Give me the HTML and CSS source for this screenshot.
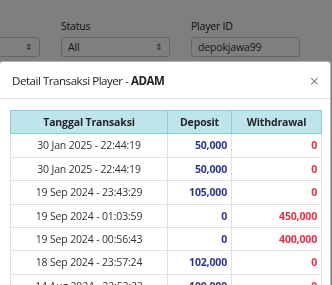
FILE: index.html
```html
<!DOCTYPE html>
<html lang="en">
<head>
    <meta charset="UTF-8">
    <meta name="viewport" content="width=device-width, initial-scale=1.0">
    <title>Detail Transaksi Player</title>
    <link rel="stylesheet" href="styles.css">
</head>
<body>

    <!-- Filter bar behind the modal -->
    <div class="filters">
        <div class="field">
            <label>Tipe</label>
            <div class="select">Semua <span class="arrows">&#8661;</span></div>
        </div>
        <div class="field">
            <label>Status</label>
            <div class="select">All <span class="arrows">&#8661;</span></div>
        </div>
        <div class="field">
            <label>Player ID</label>
            <div class="input">depokjawa99</div>
        </div>
    </div>

    <!-- Modal overlay -->
    <div class="backdrop">
        <div class="modal">
            <div class="modal-header">
                <div class="modal-title">Detail Transaksi Player - <b>ADAM</b></div>
                <button class="close">&times;</button>
            </div>
            <div class="modal-body">
                <table class="trx-table">
                    <thead>
                        <tr>
                            <th class="col-date">Tanggal Transaksi</th>
                            <th class="col-dep">Deposit</th>
                            <th class="col-wd">Withdrawal</th>
                        </tr>
                    </thead>
                    <tbody>
                        <tr><td class="date">30 Jan 2025 - 22:44:19</td><td class="dep">50,000</td><td class="wd">0</td></tr>
                        <tr><td class="date">30 Jan 2025 - 22:44:19</td><td class="dep">50,000</td><td class="wd">0</td></tr>
                        <tr><td class="date">19 Sep 2024 - 23:43:29</td><td class="dep">105,000</td><td class="wd">0</td></tr>
                        <tr><td class="date">19 Sep 2024 - 01:03:59</td><td class="dep">0</td><td class="wd">450,000</td></tr>
                        <tr><td class="date">19 Sep 2024 - 00:56:43</td><td class="dep">0</td><td class="wd">400,000</td></tr>
                        <tr><td class="date">18 Sep 2024 - 23:57:24</td><td class="dep">102,000</td><td class="wd">0</td></tr>
                        <tr><td class="date">14 Aug 2024 - 23:52:22</td><td class="dep">100,000</td><td class="wd">0</td></tr>
                    </tbody>
                </table>
            </div>
        </div>
    </div>

</body>
</html>
```

FILE: styles.css
```css
/* Basic Reset */
* {
    margin: 0;
    padding: 0;
    box-sizing: border-box;
    font-family: "Open Sans", sans-serif;
}

body {
    background-color: #fff;
    color: #212529;
    overflow: hidden;
}

/* Filters under the overlay */
.filters {
    display: flex;
    gap: 21px;
    margin-left: -69px;
    padding-top: 20px;
}

.field {
    display: flex;
    flex-direction: column;
    gap: 5px;
    width: 109px;
}

.field label {
    font-size: 10.5px;
    line-height: 12px;
    letter-spacing: -0.2px;
    color: #222;
}

.select,
.input {
    height: 20px;
    border: 1px solid #ccc;
    border-radius: 3px;
    font-size: 10.5px;
    letter-spacing: -0.15px;
    line-height: 18px;
    padding: 0 6px;
    color: #333;
    display: flex;
    justify-content: space-between;
}

.select .arrows {
    font-size: 9px;
    color: #555;
}

/* Modal */
.backdrop {
    position: fixed;
    inset: 0;
    background: rgba(0, 0, 0, 0.5);
}

.modal {
    margin-top: 61px;
    margin-left: -1px;
    width: 332px;
    background: #fff;
    border: 1px solid rgba(0, 0, 0, 0.3);
    border-radius: 4px;
    height: 400px;
}

.modal-header {
    display: flex;
    justify-content: space-between;
    align-items: center;
    height: 37px;
    padding: 0 11px 0 12px;
    border-bottom: 1px solid #dee2e6;
}

.modal-title {
    font-size: 11.5px;
    letter-spacing: -0.45px;
    color: #222;
}

.modal-title b {
    font-weight: 700;
}

.close {
    background: none;
    border: none;
    font-size: 16px;
    line-height: 1;
    color: #000;
    opacity: 0.5;
    margin-top: 2px;
    margin-right: 0;
}

.modal-body {
    padding: 11px 10px;
}

/* Transaction table */
.trx-table {
    border-collapse: collapse;
    table-layout: fixed;
    width: 311px;
    font-size: 10.5px;
    letter-spacing: -0.15px;
}

.trx-table th,
.trx-table td {
    border: 1px solid #dee2e6;
    padding: 4px 4px;
    line-height: 14.4px;
}

.trx-table th {
    background-color: #bee5eb;
    border-color: #86cfda;
    font-weight: 700;
    text-align: center;
    color: #212529;
    padding: 4px;
}

.col-date { width: 157px; }
.col-dep { width: 64px; }
.col-wd { width: 90px; }

.trx-table td.date {
    text-align: center;
    color: #333;
}

.trx-table td.dep {
    text-align: right;
    font-weight: 700;
    color: #2b3a8c;
}

.trx-table td.wd {
    text-align: right;
    font-weight: 700;
    color: #e03347;
}
```
